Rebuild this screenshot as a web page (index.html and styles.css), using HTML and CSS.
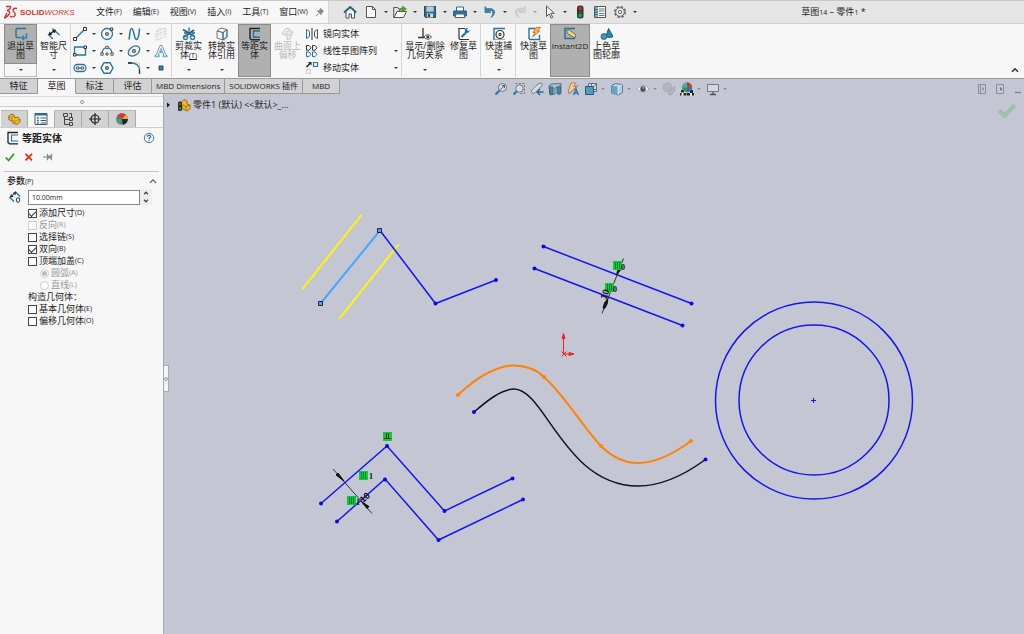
FILE: index.html
```html
<!DOCTYPE html>
<html lang="zh-CN">
<head>
<meta charset="utf-8">
<title>SOLIDWORKS</title>
<link rel="stylesheet" href="styles.css">
</head>
<body>
<div class="app">
  <header class="titlebar">
    <div class="menubar">
      <div class="brand">
        <svg class="brand-mark" viewBox="0 0 14 16" width="14" height="16" fill="none" stroke="#d9322c" stroke-width="1.4"><path d="M2 2.500h4.500c.8 1.500-1 3-3.500 3.800"/><path d="M3 6.500c4 .6 3.500 4.500-2.500 7.500l2.500-5"/><path d="M13 4.500c-3-.8-5 .8-3.500 2.800s2.500 2.400 1.500 4-3.500 1.800-5 1"/></svg>
        <span class="brand-name"><b>SOLID</b><i>WORKS</i></span>
      </div>
      <nav class="menus">
        <button>文件<small>(F)</small></button>
        <button>编辑<small>(E)</small></button>
        <button>视图<small>(V)</small></button>
        <button>插入<small>(I)</small></button>
        <button>工具<small>(T)</small></button>
        <button>窗口<small>(W)</small></button>
      </nav>
      <button class="pin" aria-label="固定"><svg viewBox="0 0 10 10" width="10" height="10"><path d="M5.500.8 9.200 4.500l-1 .3-1.600 1.600-.2 2L1.600 3.600l2-.2L5.200 1.800z" fill="#888"/><path d="M3.500 6.500.8 9.200" stroke="#888"/></svg></button>
    </div>
    <div class="quick">
      <button aria-label="主页"><svg viewBox="0 0 14 14" width="14" height="14"><path d="M3 6v7h3V9h2.500v4H11.500V6" fill="#fff" stroke="#3b5361"/><path d="M1 7.500 7.200 2l6 5.500" fill="none" stroke="#23617f" stroke-width="1.700"/></svg></button>
      <button class="has-caret" aria-label="新建"><svg viewBox="0 0 14 14" width="14" height="14"><path d="M2.500 1.500h6l3 3v8h-9z" fill="#fff" stroke="#555"/><path d="M8.500 1.500v3h3" fill="none" stroke="#555"/></svg><i class="caret"></i></button>
      <button class="has-caret" aria-label="打开"><svg viewBox="0 0 14 14" width="14" height="14"><path d="M.7 12.500v-10h4l1 1.500h4v8.500z" fill="#e4e6e6" stroke="#555"/><path d="m1 12.500 3-6h9.500l-3 6z" fill="#fff" stroke="#555"/><path d="M6 6c0-2 1-3 3.500-3V1l4 3-4 3V5C8 5 7 5.500 6 6" fill="#55a820" stroke="#317b12" stroke-width=".5"/></svg><i class="caret"></i></button>
      <button class="has-caret" aria-label="保存"><svg viewBox="0 0 14 14" width="14" height="14"><path d="M1.500 1.500h11v11h-10l-1-1z" fill="#2f6f91" stroke="#244b5f"/><path d="M3.500 1.500h7v5h-7z" fill="#dfeef5"/><path d="M4 3h6M4 5h6" stroke="#6b8897" stroke-width=".7"/><path d="M4 8.500h6v4H4z" fill="#d8d8d8"/><path d="M5 9h2v3H5z" fill="#31485a"/></svg><i class="caret"></i></button>
      <button class="has-caret" aria-label="打印"><svg viewBox="0 0 14 14" width="14" height="14"><path d="M3.500 6V2h7v4" fill="#fff" stroke="#3d6980"/><path d="M.7 6h12.600v5H.7z" fill="#287ba2" stroke="#1d587a"/><path d="M3 9h8l1 3.500H2z" fill="#fff" stroke="#48616f"/></svg><i class="caret"></i></button>
      <button class="has-caret" aria-label="撤消"><svg viewBox="0 0 14 14" width="14" height="14"><path d="M2 1.500v6h6L6 5.700c3-1 5 1.200 3 5l-1 1.800c5-3 5-9-1.500-9L4 3.700z" fill="#3a83ad" stroke="#1f5f86" stroke-width=".6"/></svg><i class="caret"></i></button>
      <button class="has-caret off" aria-label="重做"><svg viewBox="0 0 14 14" width="14" height="14"><path d="M12 1.500v6H6l2-1.800c-3-1-5 1.200-3 5l1 1.800c-5-3-5-9 1.500-9l2.500.2z" fill="#d4d4d4" stroke="#bbb" stroke-width=".6"/></svg><i class="caret"></i></button>
      <button class="has-caret" aria-label="选择"><svg viewBox="0 0 14 14" width="14" height="14"><path d="M3.500 1v10.500l2.700-2.600 2 4.300 1.500-.8-1.900-4.100h3.400z" fill="#fff" stroke="#444" stroke-width=".9"/></svg><i class="caret"></i></button>
      <button class="wide" aria-label="重建"><svg viewBox="0 0 14 14" width="14" height="14"><rect x="4" y=".5" width="6.500" height="13" rx="2.500" fill="#2d3a2f"/><circle cx="7.200" cy="3.300" r="1.900" fill="#cf2a22"/><circle cx="7.200" cy="7" r="1.200" fill="#555"/><circle cx="7.200" cy="10.500" r="1.900" fill="#18a24c"/></svg></button>
      <button class="wide" aria-label="文件属性"><svg viewBox="0 0 14 14" width="14" height="14"><path d="M1.500 1.500h11v11h-11z" fill="#fff" stroke="#555"/><path d="M2 2h3v10H2z" fill="#6fb1d0"/><path d="M2 4.500h3M2 7h3M2 9.500h3M6 4h5.500M6 6h5.500M6 8.500h5.500M6 10.500h5.500" stroke="#4b6573" stroke-width=".9"/></svg></button>
      <button class="has-caret" aria-label="选项"><svg viewBox="0 0 14 14" width="14" height="14"><circle cx="7" cy="7" r="5.300" fill="none" stroke="#666" stroke-width="1.600" stroke-dasharray="2.400 1.760"/><circle cx="7" cy="7" r="4.300" fill="#f0f0f0" stroke="#666"/><circle cx="7" cy="7" r="1.700" fill="none" stroke="#666"/></svg><i class="caret"></i></button>
    </div>
    <h1 class="doc-title">草图<small>14</small> – 零件<small>1</small> *</h1>
  </header>

  <div class="ribbon">
    <div class="group first">
      <div class="split">
        <button class="tool pressed"><svg viewBox="0 0 14 14" width="14" height="14" fill="none"><path d="M12 1.500H3l-1 1v7l1 1h3.500" stroke="#2e7599" stroke-width="1.500"/><path d="M12.500 6v5H8m2-2.500L7.700 11l2.300 2" stroke="#2887b4" stroke-width="1.500"/></svg><span>退出草<br>图</span></button>
        <button class="split-menu" aria-label="草图菜单"><i class="caret"></i></button>
      </div>
      <button class="tool"><svg viewBox="0 0 14 14" width="14" height="14" fill="none"><path d="m5.500 1.500 7 6.500M1 7l5 5" stroke="#2e7599" stroke-width="1.300"/><path d="m2.500 7.500 5-4" stroke="#222" stroke-width="1.300"/><path d="m1.500 8.500 1-4 3 3zM8.800 2.500l-1 4-3-3z" fill="#222"/></svg><span>智能尺<br>寸</span><i class="caret"></i></button>
    </div>
    <div class="group sketch-tools">
      <button aria-label="直线"><svg viewBox="0 0 14 14" width="14" height="14"><path d="M2 12 12 2" stroke="#2874a0" stroke-width="1.400"/><g fill="#fff" stroke="#333"><path d="M.5 10.500h3v3h-3zM10.500.5h3v3h-3z"/></g></svg><i class="caret"></i></button>
      <button aria-label="圆"><svg viewBox="0 0 14 14" width="14" height="14"><circle cx="7" cy="7" r="5.500" fill="none" stroke="#2874a0" stroke-width="1.300"/><path d="M5.800 5.800h2.400v2.400H5.800zM10.300 1h2.400v2.400h-2.400z" fill="#fff" stroke="#333"/></svg><i class="caret"></i></button>
      <button aria-label="样条曲线"><svg viewBox="0 0 14 14" width="14" height="14"><path d="M2 12.500C3 8 2.500 1.500 4.700 1.500S7 12.500 9.500 12.500 12 6 12.500 1.500" fill="none" stroke="#2874a0" stroke-width="1.500"/></svg><i class="caret"></i></button>
      <button aria-label="基准面"><svg viewBox="0 0 14 14" width="14" height="14" fill="none" stroke="#ccc"><path d="M2 4.500 10.500 1v9L2 13.500zM4 3.500v9M7 2.500v9M2 8l8.500-3.500M4 1.500h8v10" stroke-dasharray="1.500 1"/></svg></button>
      <button aria-label="矩形"><svg viewBox="0 0 14 14" width="14" height="14"><path d="M1.500 3h11v8h-11z" fill="none" stroke="#2874a0" stroke-width="1.300"/><path d="M.5 9.500H3V12H.5zM11 2h2.500v2.500H11z" fill="#fff" stroke="#333"/></svg><i class="caret"></i></button>
      <button aria-label="圆弧"><svg viewBox="0 0 14 14" width="14" height="14"><path d="M2 10C2 1.500 12 1.500 12 10" fill="none" stroke="#2874a0" stroke-width="1.300"/><path d="M.8 8.800h2.400v2.400H.8zM5.800 2.300h2.400v2.400H5.800zM10.800 8.800h2.400v2.400h-2.400zM6 9h2v2H6z" fill="#fff" stroke="#333" stroke-width=".8"/></svg><i class="caret"></i></button>
      <button aria-label="椭圆"><svg viewBox="0 0 14 14" width="14" height="14"><ellipse cx="7" cy="7" rx="6.300" ry="4.300" transform="rotate(-35 7 7)" fill="none" stroke="#2874a0" stroke-width="1.300"/><path d="M5.800 5.800h2.400v2.400H5.800z" fill="#fff" stroke="#333"/></svg><i class="caret"></i></button>
      <button aria-label="文字"><svg viewBox="0 0 14 14" width="14" height="14" fill="none" stroke="#5799b9" stroke-width=".9"><path d="M6 1.500h2l4 10h1.200v1.200H9v-1.200h1L9 8.700H5.200l-1 2.800h1.100v1.200H1v-1.200h1zM7 4.500 5.700 7.500h2.700z"/></svg></button>
      <button aria-label="槽口"><svg viewBox="0 0 14 14" width="14" height="14" fill="none"><rect x="1" y="3.500" width="12" height="7" rx="3.500" stroke="#2874a0" stroke-width="1.300"/><path d="M3.500 6h2.200v2.200H3.500zM8.300 6h2.200v2.200H8.300zM5.700 7h2.600" stroke="#333" stroke-width=".8"/></svg><i class="caret"></i></button>
      <button aria-label="多边形"><svg viewBox="0 0 14 14" width="14" height="14" fill="none"><path d="M4 1.700h6L13 7l-3 5.300H4L1 7z" stroke="#2874a0" stroke-width="1.400"/><path d="M5.800 5.800h2.400v2.400H5.800z" stroke="#333"/></svg></button>
      <button aria-label="圆角"><svg viewBox="0 0 14 14" width="14" height="14" fill="none"><path d="M1 2h4c4 0 7.500 3 7.500 7" stroke="#2874a0" stroke-width="1.300"/><path d="M1 2h4M12.500 8.500V13" stroke="#333" stroke-width="1.300"/><path d="M7 2h5.500v5" stroke="#888" stroke-width=".7" stroke-dasharray="1 1"/></svg><i class="caret"></i></button>
      <button aria-label="点"><svg viewBox="0 0 14 14" width="14" height="14"><path d="M5 5h4v4H5z" fill="#2b8cbb" stroke="#254f66"/></svg></button>
    </div>
    <div class="group no-end">
      <button class="tool"><svg viewBox="0 0 14 14" width="14" height="14" fill="none"><path d="M1 2.500 12 9M2 10l10-7" stroke="#225f80" stroke-width="1.800"/><circle cx="3.500" cy="10.500" r="2" stroke="#2783ad" stroke-width="1.500"/><circle cx="10.500" cy="10.500" r="2" stroke="#2783ad" stroke-width="1.500"/><path d="M7 .5v4M2 6h3M10 6h3" stroke="#225f80" stroke-width="1.300"/></svg><span>剪裁实<br>体<small>(T)</small></span><i class="caret"></i></button>
      <button class="tool"><svg viewBox="0 0 14 14" width="14" height="14"><path d="m2 4 4-3 6 1.500v7.500l-4 3-6-2z" fill="#f4f4f4" stroke="#777"/><path d="m2 4 6 1.500 4-3M8 5.500V13" fill="none" stroke="#555"/><path d="M8 5.500V13l4-3V2.500" fill="none" stroke="#2874a0"/></svg><span>转换实<br>体引用</span><i class="caret"></i></button>
      <button class="tool pressed"><svg viewBox="0 0 14 14" width="14" height="14" fill="none"><path d="M12 1.500H2v10l1.500 1.300H12" stroke="#222" stroke-width="1.400"/><path d="M12 4H5.500v6.300H12" stroke="#1f719b" stroke-width="1.400"/></svg><span>等距实<br>体</span></button>
      <button class="tool off" disabled><svg viewBox="0 0 14 14" width="14" height="14" fill="#eee" stroke="#c7c7c7"><path d="M1 7c1-3 3-5 6-6l5.500 4.500C11 7 9.500 8.500 9 12L6 12.500V8z"/><path d="m5 5.500 3-2 2.500 2.500-3 2.500z"/></svg><span>曲面上<br>偏移</span></button>
    </div>
    <div class="group list-tools">
      <button><svg viewBox="0 0 14 14" width="14" height="14" fill="none"><path d="M1.500 2.500v9l3-2v-5z" stroke="#2874a0"/><path d="M7 1v12" stroke="#333"/><path d="M12.500 2.500v9l-3-2v-5z" stroke="#555"/></svg>镜向实体</button>
      <button><svg viewBox="0 0 14 14" width="14" height="14" fill="none" stroke="#333"><path d="M1.500 1.500H4l2 2.300-2 2.400H1.500zM7.500 1.500H10l2 2.300-2 2.400H7.500z"/><path d="M1.500 8H4l2 2.300-2 2.400H1.500zM7.500 8H10l2 2.300-2 2.400H7.500z" stroke="#2874a0"/></svg>线性草图阵列<i class="caret"></i></button>
      <button><svg viewBox="0 0 14 14" width="14" height="14" fill="none"><path d="m1.500 6 4-4" stroke="#222" stroke-width="1.500"/><path d="M3 1h3.500v3.500z" fill="#222"/><path d="M8.500 1.500h4v4h-4z" stroke="#2874a0" stroke-width="1.200"/><path d="M1.500 8.500h4v4h-4z" stroke="#aaa" stroke-dasharray="1 1"/></svg>移动实体<i class="caret"></i></button>
    </div>
    <div class="group">
      <button class="tool broad"><svg viewBox="0 0 14 14" width="14" height="14" fill="none"><path d="M5 1v9.500M0 10.500h9" stroke="#333" stroke-width="1.300"/><path d="M6 10c2-3 5.500-3 7.500 0-2 3-5.500 3-7.500 0z" fill="#fff" stroke="#555"/><circle cx="9.800" cy="10" r="1.500" fill="#333"/></svg><span>显示/删除<br>几何关系</span><i class="caret"></i></button>
      <button class="tool"><svg viewBox="0 0 14 14" width="14" height="14" fill="none"><path d="M8 1.500H2v10l1 1h9" stroke="#333" stroke-width="1.200"/><path d="m4.500 10 5-5" stroke="#23729a" stroke-width="2.200"/><path d="M13 2.500 11.300 4.200 9.800 2.700 11.300 1C8.500.5 7 2.500 8 4.700s4.500 1.800 5-2.200z" fill="#23729a"/></svg><span>修复草<br>图</span></button>
    </div>
    <div class="group">
      <button class="tool"><svg viewBox="0 0 14 14" width="14" height="14" fill="none"><path d="M2 13V1.500h11" stroke="#2874a0" stroke-width="1.400"/><circle cx="8" cy="7.500" r="4" stroke="#333" stroke-width="1.200"/><path d="M7 6.500h2v2H7z" stroke="#333"/><path d="M2 12.500h11" stroke="#888" stroke-width=".7"/></svg><span>快速捕<br>捉</span><i class="caret"></i></button>
    </div>
    <div class="group no-end">
      <button class="tool"><svg viewBox="0 0 14 14" width="14" height="14" fill="none"><path d="M8 1.500H2v10l1 1h9.500V8" stroke="#2874a0" stroke-width="1.400"/><path d="M9 .5h4.500L10.500 4h2.200L5.500 10 8 5.500H6z" fill="#f6b735" stroke="#d4582a" stroke-width=".8"/></svg><span>快速草<br>图</span></button>
      <button class="tool instant pressed"><svg viewBox="0 0 14 14" width="14" height="14" fill="none"><path d="M12 1.500H2v10h10" stroke="#23729a" stroke-width="1.500"/><path d="m3.500 3.500 3-.5 6.500 5-1 3-7.500-4.500z" fill="#edd77a" stroke="#555" stroke-width=".8"/></svg><span>Instant2D</span></button>
      <button class="tool"><svg viewBox="0 0 14 14" width="14" height="14"><path d="M8.500 1.500 13 9.500c-2 1.300-5 1.300-7 0z" fill="#2f82aa" stroke="#1d5b7c"/><circle cx="4" cy="9.500" r="3" fill="#4895b8" stroke="#1d5b7c" stroke-width=".8"/></svg><span>上色草<br>图轮廓</span></button>
    </div>
    <button class="collapse" aria-label="折叠"><svg viewBox="0 0 8 6" width="8" height="6"><path d="m1 4.800 3-3 3 3" fill="none" stroke="#333" stroke-width="1.500"/></svg></button>
  </div>

  <div class="workspace">
    <nav class="tabs">
      <button>特征</button><button class="current">草图</button><button>标注</button><button>评估</button><button class="latin">MBD Dimensions</button><button class="latin">SOLIDWORKS 插件</button><button class="latin">MBD</button>
    </nav>

    <aside class="panel">
      <div class="grip"><i></i></div>
      <div class="panel-tabs">
        <button aria-label="设计树"><svg viewBox="0 0 14 14" width="14" height="14"><path d="M1.500 4.500 4 2l3 1 .5 3L11 5l2 2v3l-3 2.500L5.500 11 5 8.500 2 8z" fill="#f0bd2b" stroke="#997114"/><path d="m1.500 4.500 3.300 1L7 3M5 8.500l3 .8L13 7M8 9.300V12M4.800 5.500V8" fill="none" stroke="#a77c16" stroke-width=".8"/></svg></button>
        <button class="current" aria-label="属性"><svg viewBox="0 0 14 14" width="14" height="14"><path d="M1 1.500h12v11H1z" fill="#fff" stroke="#456"/><path d="M1 1.500h12v2H1z" fill="#2874a0"/><path d="M3 6h2M3 8.500h2M3 11h2" stroke="#2480ad" stroke-width="1.500"/><path d="M6.500 6H12M6.500 8.500H12M6.500 11H12" stroke="#456"/></svg></button>
        <button aria-label="配置"><svg viewBox="0 0 14 14" width="14" height="14" fill="none" stroke="#444"><path d="M2.500 1.500h4v3h-4zM8.500 5.500h3v3h-3zM8.500 10.500h3v3h-3zM3.500 4.500v8h5M3.500 7.500h5M8.500 1.500h2v4"/></svg></button>
        <button aria-label="尺寸专家"><svg viewBox="0 0 14 14" width="14" height="14" fill="none" stroke="#222" stroke-width="1.200"><circle cx="7" cy="7" r="4"/><path d="M7 1v12M1 7h12"/></svg></button>
        <button aria-label="显示"><svg viewBox="0 0 14 14" width="14" height="14"><circle cx="7" cy="7" r="5.800" fill="#3d7bc8"/><path d="M7 7V1.200A5.800 5.800 0 0 1 12.800 7z" fill="#e3b426"/><path d="M7 7 2 4A5.800 5.800 0 0 1 11 2.800z" fill="#d53a2a"/><path d="M7 7H1.200A5.800 5.800 0 0 0 5 12.500z" fill="#4ba542"/><path d="M7 7h5.800A5.800 5.800 0 0 1 8 12.700z" fill="#222"/></svg></button>
      </div>
      <div class="pm-title">
        <svg viewBox="0 0 14 14" width="14" height="14" fill="none"><path d="M12 1.500H2v10l1.500 1.300H12" stroke="#222" stroke-width="1.300"/><path d="M12 4H5.500v6H12" stroke="#2874a0" stroke-width="1.100"/></svg>
        <h2>等距实体</h2>
        <button aria-label="帮助"><svg viewBox="0 0 12 12" width="12" height="12" fill="none"><circle cx="6" cy="6" r="4.700" stroke="#5a7280"/><path d="M4.400 4.700c0-2.200 3.200-2 3.200-.2C7.600 5.700 6 5.700 6 7.200M6 8.200v1.100" stroke="#2874a0" stroke-width="1.300"/></svg></button>
      </div>
      <div class="pm-actions">
        <button aria-label="确定"><svg viewBox="0 0 10 10" width="10" height="10"><path d="m.8 5.500 2.800 3L9 1.800" fill="none" stroke="#2c9c1a" stroke-width="1.800"/></svg></button>
        <button aria-label="取消"><svg viewBox="0 0 10 10" width="10" height="10"><path d="m1.500 1.800 6.500 6.500M8 1.800 1.500 8.300" stroke="#e02e13" stroke-width="1.700"/></svg></button>
        <button aria-label="保持可见"><svg viewBox="0 0 10 10" width="10" height="10"><path d="M0 5h4M4.500 1.800v6.400M8.500 1.800v6.400" stroke="#888" stroke-width="1.200"/><path d="M5 3.500h4v3H5z" fill="#888"/></svg></button>
      </div>
      <section class="params">
        <div class="params-head"><h3>参数<small>(P)</small></h3><svg viewBox="0 0 8 6" width="8" height="6"><path d="m1 4.800 3-3 3 3" fill="none" stroke="#555" stroke-width="1.200"/></svg></div>
        <div class="distance">
          <svg viewBox="0 0 14 14" width="14" height="14" fill="none"><path d="M1.500 7 6 11.500M7 1.500l5 5" stroke="#2874a0" stroke-width="1.300"/><path d="m2.500 7 5-4.500" stroke="#222"/><path d="M2 7.500 3 4l2.500 2.800zM8.200 2l-1 3.300L4.700 2.800z" fill="#222"/><ellipse cx="10" cy="10" rx="1.700" ry="2.300" stroke="#333"/></svg>
          <input type="text" value="10.00mm" aria-label="等距距离">
          <div class="spin"><button aria-label="增加"><svg viewBox="0 0 6 4" width="6" height="4"><path d="m1 3.200 2-2 2 2" fill="none" stroke="#444" stroke-width="1.300"/></svg></button><button aria-label="减少"><svg viewBox="0 0 6 4" width="6" height="4"><path d="m1 .8 2 2 2-2" fill="none" stroke="#444" stroke-width="1.300"/></svg></button></div>
        </div>
        <div class="options">
          <label><input type="checkbox" checked>添加尺寸<small>(D)</small></label>
          <label class="off"><input type="checkbox" disabled>反向<small>(R)</small></label>
          <label><input type="checkbox">选择链<small>(S)</small></label>
          <label><input type="checkbox" checked>双向<small>(B)</small></label>
          <label><input type="checkbox">顶端加盖<small>(C)</small></label>
          <label class="off sub"><input type="radio" name="cap" checked disabled>圆弧<small>(A)</small></label>
          <label class="off sub"><input type="radio" name="cap" disabled>直线<small>(L)</small></label>
          <p>构造几何体：</p>
          <label><input type="checkbox">基本几何体<small>(E)</small></label>
          <label><input type="checkbox">偏移几何体<small>(O)</small></label>
        </div>
      </section>
    </aside>

    <main class="viewport">
      <svg class="sketch" width="100%" height="100%" fill="none">
        <g transform="translate(-164 -79)">
          <g stroke="#fff800" stroke-width="2"><path d="M361.500 215 302.500 289M398.500 244.500 339.500 318.500"/></g>
          <path d="m320.500 303.500 59.500-73" stroke="#4aa5ff" stroke-width="2"/>
          <g stroke="#1414f5" stroke-width="1.500">
            <path d="m380 230.500 55.500 73 60.500-23.500M543.500 246.500l148 57M534.500 268.500l148 57"/>
            <path d="M321 503.500 387 446l57.500 65 68-32.500M337 521.500l48-42.500 53.500 61 84.500-40.500"/>
            <circle cx="814" cy="400.500" r="98.500"/><circle cx="814" cy="400" r="75"/>
            <path d="M811 400.500h5M813.500 398v5" stroke-width="1"/>
          </g>
          <g fill="#4aa5ff" stroke="#222"><path d="M377.500 228.500h4v4h-4zM318.500 301.500h4v4h-4z"/></g>
          <path d="M474 412C488 400 502 389 514 389 545 389 565 486 638 486 660 486 683 476 705.500 459.500" stroke="#111118" stroke-width="1.500"/>
          <path d="M458 395C478 376 498 365.500 513 365.500 525 365.500 536 369 544 377 566 397 582 426 601 446 612 457 625 463 638 463 655 463 672 455 691 441" stroke="#ff8207" stroke-width="2"/>
          <g fill="#ff8207"><circle cx="458" cy="395" r="2"/><circle cx="544" cy="377" r="2"/><circle cx="601" cy="446" r="2"/><circle cx="691" cy="441" r="2"/></g>
          <g fill="#0808f0"><circle cx="435.500" cy="303.500" r="2"/><circle cx="496" cy="280" r="2"/><circle cx="543.500" cy="246.500" r="2"/><circle cx="691.500" cy="303.500" r="2"/><circle cx="534.500" cy="268.500" r="2"/><circle cx="682.500" cy="325.500" r="2"/><circle cx="321" cy="503.500" r="2"/><circle cx="387" cy="446" r="2"/><circle cx="444.500" cy="511" r="2"/><circle cx="512.500" cy="478.500" r="2"/><circle cx="337" cy="521.500" r="2"/><circle cx="385" cy="479.500" r="2"/><circle cx="438.500" cy="540" r="2"/><circle cx="523" cy="499.500" r="2"/><circle cx="474" cy="412" r="2"/><circle cx="705.500" cy="459.500" r="2"/></g>
          <g stroke="#333"><path d="m623.500 258.500-21.500 55M333 469l39 44.500"/></g>
          <path d="m616.500 275 1.500-6 2.500 1zM608 298.500l-1 6-2.500 4-1.500-.6 1.500-5zM344 481l-8-6 2-2zM361.500 501.500l7.500 5-2 2z" fill="#111" stroke="#111"/>
          <g fill="#10c93a"><path d="M613 261h9v9h-9zM605 283h9v9h-9zM383 432h9v9h-9zM359 471h9v9h-9zM347 496h9v9h-9z"/></g>
          <g stroke="#08702a" stroke-width=".8"><path d="M615.500 262v7M617.500 262v7M619.500 262v7M607.500 284v7M609.500 284v7M611.500 284v7M361.500 472v7M363.500 472v7M365.500 472v7M349.500 497v7M351.500 497v7M353.500 497v7"/></g>
          <path d="M384 438.500h7M386.500 433v5M388.500 433v5" stroke="#111" stroke-width=".8"/>
          <g class="marks"><text x="621" y="270">0</text><text x="613" y="292">0</text><text x="369" y="479">1</text><text x="356" y="505">1</text><text class="dim" transform="translate(606 300) rotate(-70)">10</text><text class="dim" transform="translate(363 503) rotate(-41)">10</text></g>
          <g stroke="#f02020" fill="#f02020"><path d="M563.500 354v-16M564 354h6"/><path d="m563.500 333.500-1.500 5h3zM574 354l-5-1.500v3z"/><path d="m561.500 351.500 5 5m0-5-5 5" fill="none"/></g>
        </g>
      </svg>

      <div class="view-head">
        <div class="hud">
          <button aria-label="整屏显示"><svg viewBox="0 0 14 14" width="14" height="14" fill="none"><path d="M1.500 12.500 6 8" stroke="#2c789c" stroke-width="2.200"/><circle cx="8.500" cy="5.500" r="4" fill="#d5dae1" stroke="#6d7984"/><path d="m6.500 7.500 4-4m-2.500 0h2.500V6" stroke="#567"/></svg></button>
          <button aria-label="局部放大"><svg viewBox="0 0 14 14" width="14" height="14" fill="none"><path d="M1.500 12.500 5 9" stroke="#2c789c" stroke-width="2.200"/><circle cx="7.500" cy="6.500" r="3.700" fill="#d5dce4" stroke="#6d7984"/><path d="M3.500 1.500h9v10H8" stroke="#777" stroke-dasharray="2 1.500"/></svg></button>
          <button aria-label="上一视图"><svg viewBox="0 0 14 14" width="14" height="14" fill="none"><path d="m1 9 7-7 3.500-1 1 2-6.500 7-3 2z" fill="#d8dadd" stroke="#7a848d"/><path d="M13.500 10H7m3-3-3 3 3 3" stroke="#256f95" stroke-width="1.500"/></svg></button>
          <button aria-label="剖面视图"><svg viewBox="0 0 14 14" width="14" height="14"><path d="m1 4 2-2 10-.5v10L11 13V5L7 6v6l-5 1z" fill="#aebcc6" stroke="#5d707b"/><path d="M1.500 4.500 5 5v7.500l-3.500-1zM9 5l3.500-1v7L9 12z" fill="#3d89ad" stroke="#26566e" stroke-width=".6"/></svg></button>
          <button aria-label="动态注解"><svg viewBox="0 0 14 14" width="14" height="14"><path d="M2 10 5 1h5L7.500 4.500H11L4 11z" fill="#f1d296" stroke="#c4703a" stroke-width=".9"/><path d="m12.500 3-10 9" stroke="#76848d"/><path d="m7.500 13 2.500-6 2.500 6M8.500 11h3" fill="none" stroke="#2874a0" stroke-width="1.300"/></svg></button>
          <button class="has-caret" aria-label="视图定向"><svg viewBox="0 0 14 14" width="14" height="14" fill="none"><path d="M4.500 4V1.500h8v8H10" fill="#d9dde3" stroke="#5d707b"/><path d="M7.500 1.500V4M10 4.500l2.500-3M10 7.500h2.500" stroke="#5d707b"/><path d="M1.500 4.500h8v8h-8z" fill="#559bbd" stroke="#225b78"/></svg><i class="caret"></i></button>
          <button class="has-caret" aria-label="显示样式"><svg viewBox="0 0 14 14" width="14" height="14"><path d="m1.500 3.500 4-2 7 1v8l-4 2.500-7-2z" fill="#bccfdb" stroke="#5d7988"/><path d="M1.500 3.500 8 5v7.800l-6.500-1.700z" fill="#5da8cc"/><path d="m8 5 4.500-2.500M8 5v7.500" stroke="#e3edf2" stroke-width=".8"/></svg><i class="caret"></i></button>
          <button class="has-caret" aria-label="隐藏/显示"><svg viewBox="0 0 14 14" width="14" height="14"><path d="M1 7c3-4.500 9-4.500 12 0-3 4-9 4-12 0z" fill="#eceef0" stroke="#aaa"/><circle cx="7" cy="7" r="2.700" fill="#4a4d52"/><circle cx="7.500" cy="6" r=".8" fill="#ddd"/></svg><i class="caret"></i></button>
          <button aria-label="编辑外观"><svg viewBox="0 0 14 14" width="14" height="14"><circle cx="5.500" cy="5.500" r="4.500" fill="#b2b4bf" stroke="#a8abb5"/><path d="m6 12 6.500-7.500V9L9 13z" fill="#b7b9c2" stroke="#a3a7b1"/></svg></button>
          <button class="has-caret" aria-label="应用布景"><svg viewBox="0 0 14 14" width="14" height="14"><path d="M1 8h12l1 5.500H0z" fill="#eee"/><path d="M1 8h3v2.500H1zM7 11h3v2.500H7zM10 8h3v3h-3zM3.500 11h3v2.500h-3zM0 11h1.500v2.500H0zM12 11h2v2.500h-2z" fill="#222"/><circle cx="7" cy="5.500" r="5" fill="#2e9d42"/><path d="M7 5.500V.5a5 5 0 0 1 5 5z" fill="#d5342d"/><path d="M7 5.500h5a5 5 0 0 1-5 5z" fill="#346fc3"/><path d="M7 5.500H2a5 5 0 0 1 5-5z" fill="#5ba3cc"/></svg><i class="caret"></i></button>
          <button class="has-caret" aria-label="视图设定"><svg viewBox="0 0 14 14" width="14" height="14"><path d="M1.500 2.500h11v7h-11z" fill="#d6d8dc" stroke="#757980"/><path d="M7 10v2.500M4 12.500h6" stroke="#555" stroke-width="1.300"/></svg><i class="caret"></i></button>
        </div>
        <div class="win">
          <button aria-label="左窗格"><svg viewBox="0 0 10 10" width="10" height="10" fill="none" stroke="#8b8e98"><path d="M1.500.5h7v9h-7zM3.500.5v9"/><path d="M7 3v4L4.800 5z" fill="#8b8e98" stroke="none"/></svg></button>
          <button aria-label="右窗格"><svg viewBox="0 0 10 10" width="10" height="10" fill="none" stroke="#8b8e98"><path d="M1.500.5h7v9h-7z"/><path d="M5 3v4l2.500-2z" fill="#777" stroke="none"/></svg></button>
          <button aria-label="最小化"><svg viewBox="0 0 10 10" width="10" height="10"><path d="M2 8.500h6" stroke="#777b85" stroke-width="1.200"/></svg></button>
        </div>
      </div>
      <div class="tree-row">
        <button class="tree" aria-label="展开"><svg viewBox="0 0 6 8" width="6" height="8"><path d="M1 1.500v5L4 4z" fill="#111"/></svg></button>
        <svg viewBox="0 0 14 14" width="14" height="14"><path d="M4.500 4 7 1.500 10 3v3l3 1v4l-3 2-4.500-2z" fill="#f0bd2b" stroke="#997114"/><path d="m6 7 3 1.500 4-1.500M9 8.500V12" fill="none" stroke="#997114"/><rect x="1" y="3.500" width="4" height="9.500" rx="1.500" fill="#222c25"/><circle cx="3" cy="6" r="1.300" fill="#d32820"/><circle cx="3" cy="10.500" r="1.300" fill="#18a24c"/></svg>
        <span class="tree-name">零件1 (默认) &lt;&lt;默认&gt;_...</span>
        <button class="confirm" aria-label="确认"><svg viewBox="0 0 20 16" width="20" height="16"><path d="m2 8.500 5.500 5L18 3" fill="none" stroke="#a3bfa8" stroke-width="4.500"/></svg></button>
      </div>
      <button class="handle" aria-label="折叠面板"><i></i></button>
    </main>
  </div>
</div>
</body>
</html>
```
FILE: styles.css
```css
* { box-sizing: border-box; }
html, body { height: 100%; margin: 0; }
body, button, input {
  font-family: "Open Sans", "Noto Sans CJK SC", sans-serif;
  font-size: 9px;
  color: #222;
}
button { display: flex; align-items: center; border: 0; padding: 0; background: none; line-height: 10px; white-space: nowrap; }
h1, h2, h3, p { margin: 0; font-size: 9px; font-weight: 400; }
small { font-size: 7px; }
svg { display: block; flex: none; }
.app { display: flex; flex-direction: column; height: 100%; background: #c4c7d3; overflow: hidden; }
.caret { flex: none; width: 0; height: 0; border: 2px solid transparent; border-top-color: #333; border-bottom: 0; }
.off, .off .caret { color: #bbb; }
.off .caret { border-top-color: #999; }

/* title bar */
.titlebar { display: flex; flex: none; height: 24px; background: #e5e5e5; border-top: 1px solid #c8c8c8; border-bottom: 1px solid #d0d0d0; }
.menubar { display: flex; align-items: center; background: #f7f7f7; padding: 0 3px 0 4px; border-right: 1px solid #d4d4d4; }
.brand { display: flex; align-items: center; gap: 2px; width: 92px; color: #d9322c; }
.brand-name { font-family: "Liberation Sans", sans-serif; font-size: 8px; }
.menus { display: flex; gap: 11px; }
.pin { margin-left: 7px; }
.quick { display: flex; align-items: center; padding-left: 14px; }
.quick button { width: 21px; }
.quick .has-caret { width: 30px; gap: 6px; }
.quick .has-caret:nth-child(2) { width: 29px; }
.quick .wide { width: 20px; }
.doc-title { flex: 1; align-self: center; text-align: center; line-height: 12px; }

/* command ribbon */
.ribbon { display: flex; flex: none; height: 55px; background: #f7f7f7; border-bottom: 1px solid #999; }
.group { display: flex; border-right: 1px solid #d6d6d6; margin: 0 1px 1px 0; }
.group.no-end { border-right: 0; margin-right: 0; }
.first { padding-left: 4px; }
.tool { flex-direction: column; width: 33px; padding: 3px 0 6px; line-height: 9px; text-align: center; }
.tool .caret { margin-top: auto; }
.tool small { text-decoration: underline; }
.broad { width: 44px; }
.instant { width: 40px; font-size: 8px; }
.pressed { background: #b0b0b0; border: 1px solid #8b8b8b; padding-top: 2px; }
.split { display: flex; flex-direction: column; }
.split .tool { flex: 1; padding-bottom: 0; }
.split-menu { height: 13px; justify-content: center; border: 1px solid #bbb; border-top: 0; }
.group.sketch-tools { display: grid; grid-template-columns: 27px 27px 27px 17px; grid-template-rows: repeat(3, 17px); align-content: center; padding-left: 1px; margin-right: 0; }
.sketch-tools button { gap: 5px; }
.list-tools { display: grid; grid-template-rows: repeat(3, 17px); align-content: center; width: 98px; padding: 0 3px 0 1px; }
.list-tools button { gap: 4px; }
.list-tools .caret { margin-left: auto; }
.collapse { margin: auto 5px 5px auto; }

/* workspace */
.workspace { display: grid; flex: 1; min-height: 0; grid-template-columns: 164px 1fr; grid-template-rows: 15px 1fr; }
.tabs { grid-area: 1 / 1 / 2 / 3; justify-self: start; display: flex; z-index: 1; }
.tabs button { justify-content: center; width: 38px; background: #d2d2d2; border-right: 1px solid #999; border-bottom: 1px solid #999; }
.tabs .current { background: #f7f7f7; border-bottom-color: #f7f7f7; }
.tabs .latin { width: auto; padding: 0 4px; font-size: 8px; }
.tabs .latin:last-child { padding: 0 9px; }

.panel { grid-area: 2 / 1; background: #f7f7f7; border-right: 1px solid #a5a8b2; }
.grip { display: flex; justify-content: center; align-items: center; height: 11px; margin-top: 2px; border-top: 1px solid #ddd; border-bottom: 1px solid #ccc; }
.grip i, .handle i { width: 4px; height: 4px; border: 1px solid #999; border-radius: 50%; }
.panel-tabs { display: flex; padding: 3px 1px 0; border-bottom: 1px solid #ccc; }
.panel-tabs button { width: 27px; height: 17px; justify-content: center; background: #d2d2d2; border-right: 1px solid #aaa; border-top: 1px solid #bbb; }
.panel-tabs .current { background: #f7f7f7; border-top-color: #f7f7f7; }
.pm-title { display: flex; align-items: center; height: 20px; padding: 0 8px 0 6px; gap: 2px; }
.pm-title h2 { flex: 1; font-size: 10px; font-weight: 700; line-height: 12px; }
.pm-actions { display: flex; gap: 9px; height: 23px; padding: 0 5px 5px; }
.params { margin: 0 4px; border-top: 1px solid #c4c4c4; }
.params-head { display: flex; justify-content: space-between; align-items: center; height: 17px; padding: 0 2px 0 3px; }
.params-head h3 { font-weight: 500; }
.distance { display: flex; align-items: center; gap: 6px; padding-left: 4px; height: 16px; }
.distance input { width: 112px; height: 15px; padding: 0 3px; border: 1px solid #888; background: #fff; font-size: 7px; }
.spin { display: flex; flex-direction: column; margin-left: -6px; background: #efefef; }
.spin button { justify-content: center; width: 12px; height: 8px; }
.options { display: grid; grid-auto-rows: 12px; align-items: center; padding: 2px 0 0 24px; line-height: 12px; }
.options label { display: flex; align-items: center; gap: 2px; }
.options small { margin-left: -2px; }
.options .off { color: #999; }
.options .sub { padding-left: 12px; }
.options input { appearance: none; display: grid; place-items: center; flex: none; width: 9px; height: 9px; margin: 0; border: 1px solid #444; background: #fff; }
.options input:disabled { border-color: #ccc; }
.options input[type="radio"] { border-radius: 50%; }
.options input[type="checkbox"]:checked::before { content: ""; width: 6px; height: 3px; border: solid #333; border-width: 0 0 1px 1px; transform: rotate(-45deg); }
.options input[type="radio"]:checked::before { content: ""; width: 5px; height: 5px; border-radius: 50%; background: #bbb; }

/* graphics area */
.viewport { grid-area: 1 / 2 / 3 / 3; position: relative; min-width: 0; }
.sketch { position: absolute; inset: 0; }
.marks { font: 700 8px "Liberation Serif", serif; fill: #111; }
.dim { font-family: "Liberation Sans", sans-serif; font-size: 9px; }
.view-head, .tree-row { position: relative; display: flex; align-items: center; }
.view-head { height: 20px; justify-content: space-between; }
.hud { display: flex; gap: 4px; margin-left: 330px; }
.hud .has-caret { gap: 3px; width: 22px; }
.hud .caret { border-top-color: #8a8d98; }
.win { display: flex; gap: 8px; padding-right: 1px; }
.tree-row { height: 12px; gap: 2px; }
.tree-row .tree { width: 9px; padding-left: 2px; margin-right: 2px; }
.tree-name { white-space: pre; line-height: 12px; }
.confirm { align-self: flex-start; margin: 3px 7px 0 auto; }
.handle { position: absolute; left: 0; top: 286px; width: 5px; height: 27px; justify-content: center; background: #f4f4f4; border: 1px solid #aaa; border-left: 0; }
```
